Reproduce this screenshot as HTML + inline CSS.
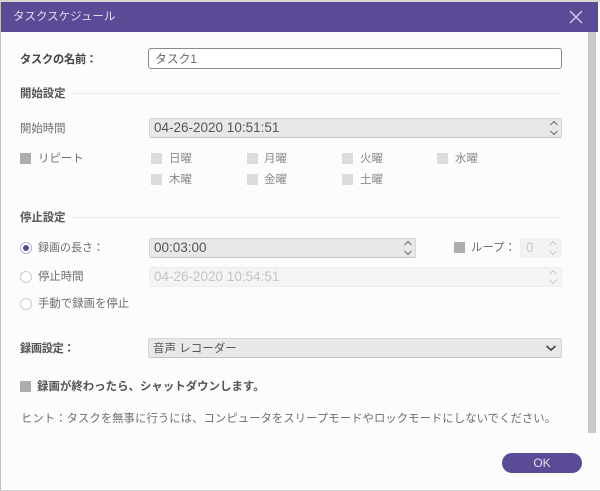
<!DOCTYPE html>
<html lang="ja"><head><meta charset="utf-8">
<style>
html,body{margin:0;padding:0}
body{width:600px;height:491px;position:relative;overflow:hidden;background:#fcfcfc;font-family:"Liberation Sans","Noto Sans CJK JP",sans-serif;color:#666}
div,span,svg{position:absolute}
.t{font-size:11.4px;line-height:16px;white-space:nowrap;color:#6e6e6e}
.b{font-weight:bold;color:#444}
.sec{font-weight:bold;color:#555}
.line{height:1px;background:#ebebeb;left:72px;width:489px}
.field{background:#e8e8e8;border:1px solid #d6d6d6;border-bottom-color:#c4c4c4;border-radius:2px;box-sizing:border-box;height:20px;font-size:13.5px;line-height:18px;color:#555;padding-left:4px;white-space:nowrap}
.cb{width:11px;height:11px;background:#dcdcdc}
.cb2{width:11px;height:11px;background:#adadad}
.day{font-size:11.5px;line-height:16px;color:#8a8a8a;white-space:nowrap}
.r{width:10px;height:10px;border:1px solid #ccc;border-radius:50%;background:#fff}
</style></head><body>
<div style="left:0;top:0;width:600px;height:2px;background:#d9d5d0"></div>
<div style="left:0;top:2px;width:1px;height:489px;background:#bdbdbd"></div>
<div style="left:0;top:490px;width:600px;height:1px;background:#d0d0d0"></div>
<div style="left:1px;top:2px;width:597px;height:30px;background:#5b4a96"></div>
<div class="t" style="left:13px;top:9px;color:#e2dcf0;font-size:11.5px">タスクスケジュール</div>
<svg style="left:569px;top:10px" width="14" height="14" viewBox="0 0 14 14"><path d="M1 1L13 13M13 1L1 13" stroke="#d8cff0" stroke-width="1.3" fill="none"/></svg>
<div style="left:588px;top:32px;width:8px;height:401px;background:#c9c9c9"></div>

<div class="t b" style="left:20px;top:51px;font-size:11.2px;letter-spacing:-.2px;margin-top:1px">タスクの名前：</div>
<div style="left:148px;top:48px;width:414px;height:21px;box-sizing:border-box;background:#fff;border:1px solid #8a8a8a;border-radius:3px;font-size:11.8px;line-height:20px;padding-left:6px;color:#666">タスク1</div>

<div class="t sec" style="left:20px;top:86px">開始設定</div>
<div class="line" style="top:93px"></div>

<div class="t" style="left:20px;top:121px">開始時間</div>
<div class="field" style="left:149px;top:118px;width:413px">04-26-2020 10:51:51</div>
<svg style="left:548px;top:119px" width="12" height="18" viewBox="0 0 12 18"><path d="M2.5 6L6 2.5L9.5 6M2.5 12L6 15.5L9.5 12" stroke="#666" stroke-width="1" fill="none"/></svg>

<div class="cb2" style="left:20px;top:153px"></div>
<div class="t" style="left:38px;top:151px">リピート</div>
<div class="cb" style="left:151px;top:153px"></div><div class="day" style="left:169px;top:151px">日曜</div>
<div class="cb" style="left:247px;top:153px"></div><div class="day" style="left:264px;top:151px">月曜</div>
<div class="cb" style="left:342px;top:153px"></div><div class="day" style="left:360px;top:151px">火曜</div>
<div class="cb" style="left:437px;top:153px"></div><div class="day" style="left:455px;top:151px">水曜</div>
<div class="cb" style="left:151px;top:174px"></div><div class="day" style="left:169px;top:172px">木曜</div>
<div class="cb" style="left:247px;top:174px"></div><div class="day" style="left:264px;top:172px">金曜</div>
<div class="cb" style="left:342px;top:174px"></div><div class="day" style="left:360px;top:172px">土曜</div>

<div class="t sec" style="left:20px;top:210px">停止設定</div>
<div class="line" style="top:217px"></div>

<div class="r" style="left:20px;top:242px;border-color:#b9b3d6"></div>
<div style="left:23px;top:245px;width:6px;height:6px;border-radius:50%;background:#5b4a96"></div>
<div class="t" style="left:38px;top:240px;font-size:11px">録画の長さ：</div>
<div class="field" style="left:149px;top:238px;width:267px">00:03:00</div>
<svg style="left:402px;top:239px" width="12" height="18" viewBox="0 0 12 18"><path d="M2.5 6L6 2.5L9.5 6M2.5 12L6 15.5L9.5 12" stroke="#666" stroke-width="1" fill="none"/></svg>
<div class="cb2" style="left:454px;top:242px"></div>
<div class="t" style="left:471px;top:240px">ループ：</div>
<div class="field" style="left:520px;top:238px;width:41px;background:#f2f2f2;border-color:#efefef;color:#ccc;padding-left:5px">0</div>
<svg style="left:547px;top:239px" width="12" height="18" viewBox="0 0 12 18"><path d="M2.5 6L6 2.5L9.5 6M2.5 12L6 15.5L9.5 12" stroke="#c8c8c8" stroke-width="1" fill="none"/></svg>

<div class="r" style="left:20px;top:271px"></div>
<div class="t" style="left:38px;top:269px">停止時間</div>
<div class="field" style="left:149px;top:267px;width:413px;background:#f4f4f4;border-color:#eee;color:#c4c4c4">04-26-2020 10:54:51</div>
<svg style="left:547px;top:268px" width="12" height="18" viewBox="0 0 12 18"><path d="M2.5 6L6 2.5L9.5 6M2.5 12L6 15.5L9.5 12" stroke="#c8c8c8" stroke-width="1" fill="none"/></svg>

<div class="r" style="left:20px;top:298px"></div>
<div class="t" style="left:38px;top:296px">手動で録画を停止</div>

<div class="t sec" style="left:20px;top:341px;font-size:11.2px;letter-spacing:-.3px">録画設定：</div>
<div class="field" style="left:148px;top:338px;width:414px;font-size:11.5px;padding-left:4px;line-height:20px">音声 レコーダー</div>
<svg style="left:544px;top:343px" width="14" height="10" viewBox="0 0 14 10"><path d="M2.5 3L7 7L11.5 3" stroke="#444" stroke-width="1.6" fill="none"/></svg>

<div class="cb2" style="left:20px;top:381px"></div>
<div class="t sec" style="left:37px;top:379px;color:#555;font-size:11.4px;letter-spacing:.05px">録画が終わったら、シャットダウンします。</div>

<div class="t" style="left:21px;top:411px;font-size:11.3px;letter-spacing:.11px">ヒント：タスクを無事に行うには、コンピュータをスリープモードやロックモードにしないでください。</div>

<div style="left:502px;top:453px;width:80px;height:20px;border-radius:10px;background:#5b4a96;color:#e6e0f2;font-size:12px;line-height:20px;text-align:center">OK</div>
</body></html>
